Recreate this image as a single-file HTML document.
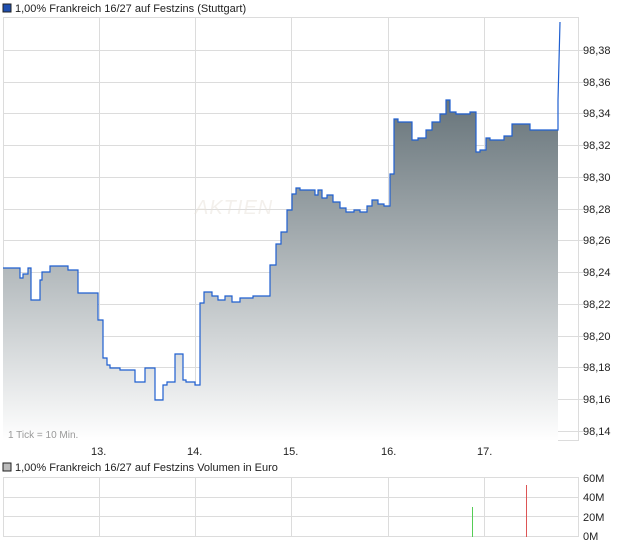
<!DOCTYPE html>
<html><head><meta charset="utf-8"><style>
body{margin:0;background:#fff;width:620px;height:546px;overflow:hidden;font-family:"Liberation Sans",sans-serif}
svg text{font-family:"Liberation Sans",sans-serif;font-size:11px;fill:#222}
</style></head><body>
<svg width="620" height="546" xmlns="http://www.w3.org/2000/svg">
<defs><linearGradient id="g" x1="0" y1="100" x2="0" y2="441" gradientUnits="userSpaceOnUse">
<stop offset="0" stop-color="#67747a"/><stop offset="1" stop-color="#ffffff"/></linearGradient></defs>
<rect x="3" y="4" width="8" height="8" fill="#1f4fb0" stroke="#222" stroke-width="1"/>
<text x="15" y="12">1,00% Frankreich 16/27 auf Festzins (Stuttgart)</text>
<g stroke="#dcdcdc" stroke-width="1" fill="none">
<rect x="3.5" y="17.5" width="575" height="423"/>
<path d="M99.5 18V441M195.5 18V441M291.5 18V441M388.5 18V441M484.5 18V441"/>
<path d="M3 50.5H584M3 82.5H584M3 113.5H584M3 145.5H584M3 177.5H584M3 209.5H584M3 240.5H584M3 272.5H584M3 304.5H584M3 336.5H584M3 367.5H584M3 399.5H584M3 431.5H584"/>
</g>
<path d="M3 268H20V278H23V274H28V268H31V300H40V280H42V272H50V266H68V270H78V293H98V320H103V358H107V365H110V368H120V370H135V382H145V368H155V400H163V385H167V382H175V354H183V380H186V382H195V385H200V303H204V292H212V296H218V300H225V296H232V302H240V298H253V296H270V265H276V244H281V232H287V210H292V194H296V188H300V190H315V195H318V190H322V198H327V195H333V202H340V208H346V212H354V210H360V212H367V206H372V200H378V204H384V206H390V174H394V119H398V122H412V140H418V138H426V130H432V122H440V114H446V100H450V112H456V114H470V112H476V152H480V150H486V138H490V140H504V136H512V124H520V124H530V130H558V441H3Z" fill="url(#g)"/>
<text x="195" y="214" style="font-size:20px;fill:#e8e2da;font-style:italic;letter-spacing:1px;opacity:0.5">AKTIEN</text>
<path d="M3 268H20V278H23V274H28V268H31V300H40V280H42V272H50V266H68V270H78V293H98V320H103V358H107V365H110V368H120V370H135V382H145V368H155V400H163V385H167V382H175V354H183V380H186V382H195V385H200V303H204V292H212V296H218V300H225V296H232V302H240V298H253V296H270V265H276V244H281V232H287V210H292V194H296V188H300V190H315V195H318V190H322V198H327V195H333V202H340V208H346V212H354V210H360V212H367V206H372V200H378V204H384V206H390V174H394V119H398V122H412V140H418V138H426V130H432V122H440V114H446V100H450V112H456V114H470V112H476V152H480V150H486V138H490V140H504V136H512V124H520V124H530V130H558V100L560 22" fill="none" stroke="#1f5fd0" stroke-width="1.2"/>
<text x="8" y="438" style="fill:#999;font-size:10px">1 Tick = 10 Min.</text>
<g>
<text x="583" y="54">98,38</text><text x="583" y="86">98,36</text><text x="583" y="117">98,34</text><text x="583" y="149">98,32</text><text x="583" y="181">98,30</text><text x="583" y="213">98,28</text><text x="583" y="244">98,26</text><text x="583" y="276">98,24</text><text x="583" y="308">98,22</text><text x="583" y="340">98,20</text><text x="583" y="371">98,18</text><text x="583" y="403">98,16</text><text x="583" y="435">98,14</text>
</g>
<text x="91" y="455">13.</text><text x="187" y="455">14.</text><text x="283" y="455">15.</text><text x="381" y="455">16.</text><text x="477" y="455">17.</text>
<rect x="3" y="463" width="8" height="8" fill="#bbb" stroke="#222" stroke-width="1"/>
<text x="15" y="471">1,00% Frankreich 16/27 auf Festzins Volumen in Euro</text>
<g stroke="#dcdcdc" stroke-width="1" fill="none">
<rect x="3.5" y="477.5" width="575" height="59"/>
<path d="M3 497.5H578M3 516.5H578M99.5 478V537M195.5 478V537M291.5 478V537M388.5 478V537M484.5 478V537"/>
</g>
<path d="M472.5 507V537" stroke="#5c5" stroke-width="1"/>
<path d="M526.5 485V537" stroke="#d55" stroke-width="1"/>
<text x="583" y="482">60M</text><text x="583" y="501">40M</text><text x="583" y="521">20M</text><text x="583" y="540">0M</text>
</svg>
</body></html>
